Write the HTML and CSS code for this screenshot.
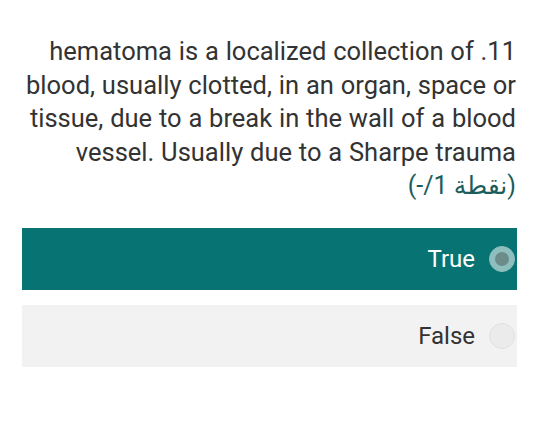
FILE: index.html
```html
<!DOCTYPE html>
<html lang="ar" dir="rtl">
<head>
<meta charset="utf-8">
<link rel="stylesheet" href="styles.css">
</head>
<body>
<main class="question">
  <p class="title">11. hematoma is a localized collection of blood, usually clotted, in an organ, space or tissue, due to a break in the wall of a blood vessel. Usually due to a Sharpe trauma</p>
  <p class="points">(نقطة 1/-)</p>
  <div class="options">
    <div class="option selected">
      <span class="radio"><span class="dot"></span></span>
      <span class="label">True</span>
    </div>
    <div class="option">
      <span class="radio"></span>
      <span class="label">False</span>
    </div>
  </div>
</main>
</body>
</html>
```
FILE: styles.css
```css
html, body {
  margin: 0;
  padding: 0;
  background: #ffffff;
}
body {
  font-family: Roboto, "Noto Sans", "DejaVu Sans", sans-serif;
  direction: rtl;
}
.question {
  padding: 35px 23px 0 22px;
}
.title {
  margin: 0;
  font-size: 25.5px;
  line-height: 33.5px;
  color: #333333;
  text-align: right;
  padding-right: 1px;
  word-spacing: 0.5px;
}
.points {
  margin: 0;
  font-size: 25px;
  line-height: 33.5px;
  color: #1c5d5c;
  text-align: right;
  padding-right: 1px;
}
.options {
  margin-top: 25px;
  display: flex;
  flex-direction: column;
  gap: 15px;
}
.option {
  height: 62px;
  background: #f2f2f2;
  display: flex;
  align-items: center;
  padding-right: 2px;
  gap: 14px;
}
.option.selected {
  background: #077473;
}
.label {
  font-size: 24px;
  color: #333333;
}
.selected .label {
  color: #ffffff;
}
.radio {
  width: 24px;
  height: 24px;
  border-radius: 50%;
  background: #ebebeb;
  border: 1px solid #e0e0e0;
  display: flex;
  align-items: center;
  justify-content: center;
}
.selected .radio {
  background: #8ebfbe;
  border-color: #8ebfbe;
}
.dot {
  width: 14px;
  height: 14px;
  border-radius: 50%;
  background: #6b8c8b;
}
```
